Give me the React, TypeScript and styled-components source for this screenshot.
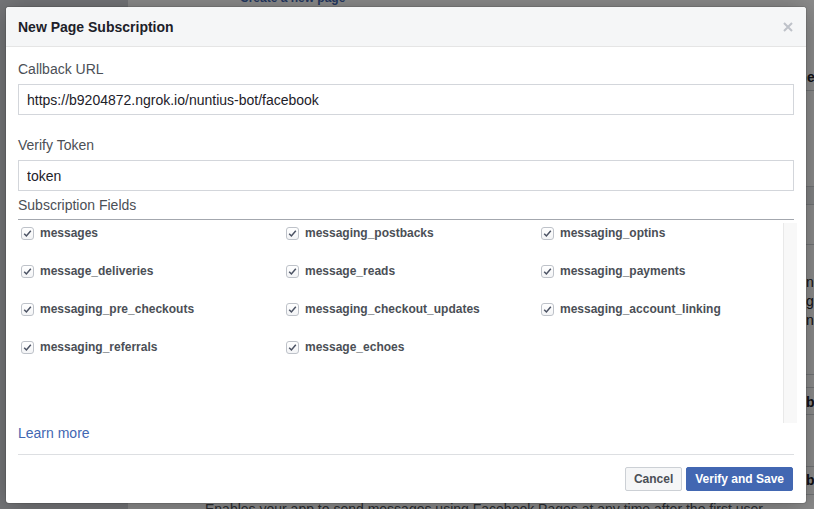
import React from "react";
import styled, { createGlobalStyle } from "styled-components";

const Global = createGlobalStyle`
  html, body { margin: 0; padding: 0; }
  body { font-family: "Liberation Sans", Arial, sans-serif; overflow: hidden; }
  * { box-sizing: border-box; }
`;

const Page = styled.div`
  position: relative;
  width: 814px;
  height: 509px;
  display: flex;
  overflow: hidden;
  background: #fff;
`;

const Sidebar = styled.div`
  width: 128px;
  flex: none;
  background: #d6d8dc;
`;

const Main = styled.div`
  flex: 1;
  display: flex;
  flex-direction: column;
  padding-left: 77px;
  min-width: 0;
`;

const TopLink = styled.a`
  display: block;
  margin: -9px 0 0 35px;
  height: 14px;
  font-size: 12px;
  line-height: 14px;
  color: #4267b2;
  font-weight: bold;
`;

const BgTable = styled.div`
  display: grid;
  grid-template-columns: 591px 200px;
  margin-top: 57px;
`;

const BgRow = styled.div<{ $h: number; $shade?: boolean }>`
  display: contents;
  & > div {
    height: ${(p) => p.$h}px;
    border-bottom: 1px solid #d0d3d8;
    background: ${(p) => (p.$shade ? "#eef0f2" : "#fff")};
  }
`;

const BgCell = styled.div<{ $bold?: boolean; $pt?: number; $pl?: number }>`
  font-size: 14px;
  line-height: 19px;
  padding-top: ${(p) => p.$pt ?? 6}px;
  padding-left: ${(p) => p.$pl ?? 0}px;
  color: #1d2129;
  font-weight: ${(p) => (p.$bold ? "bold" : "normal")};
  white-space: nowrap;
  overflow: hidden;
`;

const BottomText = styled.div`
  margin-top: auto;
  margin-bottom: -9px;
  height: 18px;
  font-size: 14px;
  line-height: 18px;
  color: #4b4f56;
  white-space: nowrap;
`;

const Dim = styled.div`
  position: absolute;
  inset: 0;
  background: rgba(0, 0, 0, 0.45);
`;

const Dialog = styled.div`
  position: absolute;
  left: 6px;
  top: 7px;
  width: 800px;
  background: #fff;
  border-radius: 3px;
  box-shadow: 0 2px 26px rgba(0, 0, 0, 0.3), 0 0 0 1px rgba(0, 0, 0, 0.1);
  overflow: hidden;
`;

const Header = styled.div`
  height: 40px;
  display: flex;
  align-items: center;
  justify-content: space-between;
  padding: 0 13px 0 12px;
  background: #f5f6f7;
  border-bottom: 1px solid #e5e5e5;
`;

const Title = styled.h1`
  margin: 0;
  font-size: 14px;
  font-weight: bold;
  color: #1d2129;
  line-height: 18px;
`;

const CloseButton = styled.button`
  width: 10px;
  height: 10px;
  border: 0;
  padding: 0;
  background: none;
  display: flex;
`;

const Body = styled.div`
  padding: 13px 12px 0;
  display: flex;
  flex-direction: column;
`;

const Label = styled.label<{ $mt?: number; $mb?: number }>`
  display: block;
  font-size: 14px;
  line-height: 18px;
  color: #4b4f56;
  margin-top: ${(p) => p.$mt ?? 0}px;
  margin-bottom: ${(p) => p.$mb ?? 6}px;
`;

const Input = styled.input`
  display: block;
  width: 100%;
  height: 31px;
  border: 1px solid #d3d6db;
  padding: 0 8px;
  font-family: inherit;
  font-size: 14px;
  color: #1d2129;
  outline: none;
`;

const Rule = styled.div<{ $color: string; $mt?: number }>`
  height: 1px;
  background: ${(p) => p.$color};
  margin-top: ${(p) => p.$mt ?? 0}px;
`;

const FieldsArea = styled.div`
  height: 203px;
  display: flex;
  margin-right: -3px;
`;

const FieldsGrid = styled.div`
  flex: 1;
  display: grid;
  grid-template-columns: 265px 255px 1fr;
  grid-auto-rows: 26px;
  row-gap: 12px;
  padding-left: 3px;
  align-content: start;
`;

const Track = styled.div`
  width: 14px;
  margin-top: 3px;
  background: #f8f8f8;
  border-left: 1px solid #e9e9e9;
`;

const Field = styled.label`
  display: flex;
  align-items: center;
  gap: 6px;
  font-size: 12px;
  font-weight: bold;
  color: #4b4f56;
  white-space: nowrap;
`;

const Box = styled.span`
  width: 13px;
  height: 13px;
  border: 1px solid #bec2c9;
  border-radius: 3px;
  background: linear-gradient(#fff, #f3f4f6);
  display: flex;
  align-items: center;
  justify-content: center;
`;

const LearnMore = styled.a`
  display: block;
  margin-top: 1px;
  font-size: 14px;
  line-height: 18px;
  color: #4267b2;
  text-decoration: none;
`;

const Footer = styled.div`
  display: flex;
  justify-content: flex-end;
  gap: 4px;
  padding: 12px 13px 12px 12px;
`;

const Button = styled.button<{ $primary?: boolean }>`
  height: 24px;
  padding: 0 8px;
  border-radius: 2px;
  font-family: inherit;
  font-size: 12px;
  font-weight: bold;
  border: 1px solid ${(p) => (p.$primary ? "#4267b2" : "#ccd0d5")};
  background: ${(p) => (p.$primary ? "#4267b2" : "#f5f6f7")};
  color: ${(p) => (p.$primary ? "#fff" : "#4b4f56")};
`;

const fields = [
  "messages",
  "messaging_postbacks",
  "messaging_optins",
  "message_deliveries",
  "message_reads",
  "messaging_payments",
  "messaging_pre_checkouts",
  "messaging_checkout_updates",
  "messaging_account_linking",
  "messaging_referrals",
  "message_echoes",
];

const Check = () => (
  <Box>
    <svg width="9" height="9" viewBox="0 0 9 9">
      <path d="M1.2 4.8 L3.4 7 L7.8 1.8" fill="none" stroke="#4b5263" strokeWidth="1.5" />
    </svg>
  </Box>
);

const bgRows: { h: number; text: string; bold?: boolean; shade?: boolean; pt?: number; pl?: number }[] = [
  { h: 29, text: "Get Started", bold: true, pt: 6 },
  { h: 96, text: "" },
  { h: 18, text: "", shade: true },
  { h: 40, text: "" },
  { h: 130, text: "new messages\ngets\nnow", pt: 28, pl: 10 },
  { h: 13, text: "" },
  { h: 27, text: "bSubscribe", bold: true, pt: 5, pl: 10 },
  { h: 52, text: "" },
  { h: 28, text: "bSubscribe", bold: true, pt: 4, pl: 10 },
];

export default function App() {
  return (
    <>
      <Global />
      <Page>
        <Sidebar />
        <Main>
          <TopLink>Create a new page</TopLink>
          <BgTable>
            {bgRows.map((r, i) => (
              <BgRow key={i} $h={r.h} $shade={r.shade}>
                <BgCell />
                <BgCell $bold={r.bold} $pt={r.pt} $pl={r.pl}>
                  {r.text.split("\n").map((t, j) => (
                    <div key={j}>{t}</div>
                  ))}
                </BgCell>
              </BgRow>
            ))}
          </BgTable>
          <BottomText>
            Enables your app to send messages using Facebook Pages at any time after the first user
          </BottomText>
        </Main>
        <Dim />
        <Dialog>
          <Header>
            <Title>New Page Subscription</Title>
            <CloseButton aria-label="Close">
              <svg width="10" height="10" viewBox="0 0 10 10">
                <path d="M1 1 L9 9 M9 1 L1 9" stroke="#bec2c9" strokeWidth="2" />
              </svg>
            </CloseButton>
          </Header>
          <Body>
            <Label>Callback URL</Label>
            <Input defaultValue="https://b9204872.ngrok.io/nuntius-bot/facebook" />
            <Label $mt={21}>Verify Token</Label>
            <Input defaultValue="token" />
            <Label $mt={5} $mb={5}>
              Subscription Fields
            </Label>
            <Rule $color="#a3a7ae" />
            <FieldsArea>
              <FieldsGrid>
                {fields.map((f) => (
                  <Field key={f}>
                    <Check />
                    {f}
                  </Field>
                ))}
              </FieldsGrid>
              <Track />
            </FieldsArea>
            <LearnMore href="#">Learn more</LearnMore>
            <Rule $color="#dddfe2" $mt={12} />
          </Body>
          <Footer>
            <Button>Cancel</Button>
            <Button $primary>Verify and Save</Button>
          </Footer>
        </Dialog>
      </Page>
    </>
  );
}
